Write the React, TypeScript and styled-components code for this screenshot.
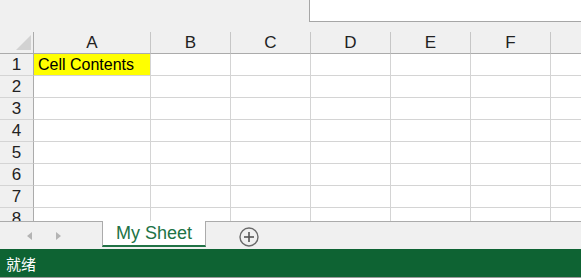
import React from "react";
import styled, { createGlobalStyle } from "styled-components";

const Global = createGlobalStyle`
  html, body { margin: 0; padding: 0; background: #f0f0f0; }
  body { font-family: "Liberation Sans", Arial, sans-serif; overflow: hidden; }
  #root { width: 581px; height: 278px; }
`;

const Page = styled.div`
  width: 581px;
  height: 278px;
  display: flex;
  flex-direction: column;
  overflow: hidden;
  background: #f0f0f0;
`;

const TopBar = styled.div`
  height: 32px;
  flex: none;
  display: flex;
  justify-content: flex-end;
  align-items: flex-start;
  background: #f0f0f0;
`;

const FormulaBox = styled.div`
  width: 271px;
  height: 21px;
  background: #ffffff;
  border-left: 1px solid #a6a6a6;
  border-bottom: 1px solid #a6a6a6;
`;

const GridArea = styled.div`
  height: 189px;
  flex: none;
  overflow: hidden;
  background: #ffffff;
`;

const Grid = styled.div`
  display: grid;
  grid-template-columns: 34px 117px repeat(6, 80px);
  grid-auto-rows: 22px;
  width: 631px;
`;

const Corner = styled.div`
  background: #f0f0f0;
  border-right: 1px solid #ababab;
  border-bottom: 1px solid #ababab;
  box-sizing: border-box;
  display: flex;
  align-items: flex-end;
  justify-content: flex-end;
  padding: 0 2px 3px 0;
`;

const ColHeader = styled.div`
  background: #f0f0f0;
  border-right: 1px solid #c6c6c6;
  border-bottom: 1px solid #ababab;
  box-sizing: border-box;
  display: flex;
  align-items: center;
  justify-content: center;
  font-size: 17px;
  color: #222;
  padding-top: 1px;
`;

const RowHeader = styled.div`
  background: #f0f0f0;
  border-right: 1px solid #ababab;
  border-bottom: 1px solid #d4d4d4;
  box-sizing: border-box;
  display: flex;
  align-items: center;
  justify-content: center;
  font-size: 17px;
  color: #222;
  padding-top: 1px;
`;

const Cell = styled.div<{ $fill?: string }>`
  background: ${(p) => p.$fill ?? "#ffffff"};
  border-right: 1px solid #d4d4d4;
  border-bottom: 1px solid #d4d4d4;
  box-sizing: border-box;
  display: flex;
  align-items: center;
  padding: 1px 0 0 4px;
  font-size: 16px;
  color: #000;
  white-space: nowrap;
`;

const TabBar = styled.div`
  height: 28px;
  flex: none;
  box-sizing: border-box;
  border-top: 1px solid #ababab;
  background: #f0f0f0;
  display: flex;
  align-items: flex-start;
`;

const NavArrows = styled.div`
  width: 102px;
  height: 27px;
  display: flex;
  align-items: center;
  padding-left: 27px;
  box-sizing: border-box;
  gap: 24px;
`;

const Arrow = styled.div<{ $dir: "left" | "right" }>`
  width: 0;
  height: 0;
  border-top: 4.5px solid transparent;
  border-bottom: 4.5px solid transparent;
  ${(p) =>
    p.$dir === "left"
      ? "border-right: 5px solid #b4b4b4;"
      : "border-left: 5px solid #b4b4b4;"}
  margin-top: 1px;
`;

const SheetTab = styled.div`
  margin-top: -1px;
  width: 104px;
  height: 26px;
  box-sizing: border-box;
  background: #ffffff;
  border-left: 1px solid #ababab;
  border-right: 1px solid #ababab;
  border-bottom: 2px solid #217346;
  display: flex;
  align-items: center;
  justify-content: center;
  font-size: 18px;
  color: #217346;
  padding-top: 1px;
`;

const AddButton = styled.div`
  margin-left: 33px;
  margin-top: 5px;
  width: 20px;
  height: 20px;
  display: flex;
`;

const StatusBar = styled.div`
  height: 29px;
  flex: none;
  box-sizing: border-box;
  background: #0e6333;
  border-bottom: 1px solid #9a9a9a;
  display: flex;
  align-items: center;
  padding-left: 6px;
  font-family: "Noto Sans CJK SC", "Liberation Sans", sans-serif;
  font-size: 15px;
  color: #ffffff;
`;

const columns = ["A", "B", "C", "D", "E", "F", ""];
const rows = [1, 2, 3, 4, 5, 6, 7, 8];

export default function App() {
  return (
    <>
      <Global />
      <Page>
        <TopBar>
          <FormulaBox />
        </TopBar>
        <GridArea>
          <Grid>
            <Corner>
              <svg width="15" height="15" viewBox="0 0 15 15">
                <polygon points="15,0 15,15 0,15" fill="#d2d2d2" />
              </svg>
            </Corner>
            {columns.map((c, i) => (
              <ColHeader key={i}>{c}</ColHeader>
            ))}
            {rows.map((r) => (
              <React.Fragment key={r}>
                <RowHeader>{r}</RowHeader>
                {columns.map((c, i) =>
                  r === 1 && i === 0 ? (
                    <Cell key={i} $fill="#ffff00">
                      Cell Contents
                    </Cell>
                  ) : (
                    <Cell key={i} />
                  )
                )}
              </React.Fragment>
            ))}
          </Grid>
        </GridArea>
        <TabBar>
          <NavArrows>
            <Arrow $dir="left" />
            <Arrow $dir="right" />
          </NavArrows>
          <SheetTab>My Sheet</SheetTab>
          <AddButton>
            <svg width="20" height="20" viewBox="0 0 20 20">
              <circle cx="10" cy="10" r="9" fill="none" stroke="#6a6a6a" strokeWidth="1.4" />
              <line x1="10" y1="5" x2="10" y2="15" stroke="#555" strokeWidth="1.6" />
              <line x1="5" y1="10" x2="15" y2="10" stroke="#555" strokeWidth="1.6" />
            </svg>
          </AddButton>
        </TabBar>
        <StatusBar>就绪</StatusBar>
      </Page>
    </>
  );
}
